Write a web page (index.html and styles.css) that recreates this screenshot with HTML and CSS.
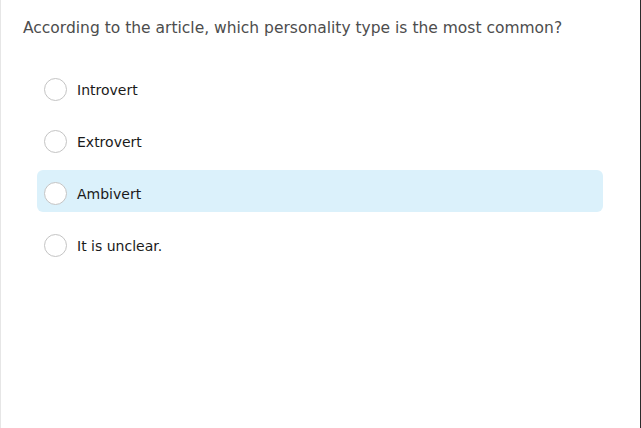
FILE: index.html
```html
<!DOCTYPE html>
<html>
<head>
<meta charset="utf-8">
<link rel="stylesheet" href="styles.css">
</head>
<body>
<div class="panel">
  <p class="question">According to the article, which personality type is the most common?</p>
  <div class="options">
    <div class="option"><span class="radio"></span><span class="label">Introvert</span></div>
    <div class="option"><span class="radio"></span><span class="label">Extrovert</span></div>
    <div class="option selected"><span class="radio"></span><span class="label">Ambivert</span></div>
    <div class="option"><span class="radio"></span><span class="label">It is unclear.</span></div>
  </div>
</div>
</body>
</html>
```
FILE: styles.css
```css
html, body {
  margin: 0;
  padding: 0;
  background: #fff;
}
.panel {
  box-sizing: border-box;
  width: 641px;
  height: 428px;
  border-left: 1px solid #e6e6e6;
  border-right: 1px solid #2b2b2b;
  padding: 0 37px 0 36px;
  font-family: "DejaVu Sans", Verdana, sans-serif;
}
.question {
  margin: 0 0 0 -14px;
  padding-top: 18px;
  height: 66px;
  box-sizing: border-box;
  font-size: 15.5px;
  line-height: 20px;
  color: #4d4d4d;
}
.options {
  display: flex;
  flex-direction: column;
  gap: 10px;
}
.option {
  box-sizing: border-box;
  height: 42px;
  padding: 4px 7px 0;
  display: flex;
  align-items: center;
  gap: 10px;
  border-radius: 6px;
}
.option.selected {
  background: #dbf1fb;
}
.radio {
  box-sizing: border-box;
  width: 23px;
  height: 23px;
  border-radius: 50%;
  border: 1px solid #c4c4c4;
  background: #fff;
  flex: none;
}
.label {
  padding-top: 2px;
  font-size: 14px;
  color: #1a1a1a;
}
```
